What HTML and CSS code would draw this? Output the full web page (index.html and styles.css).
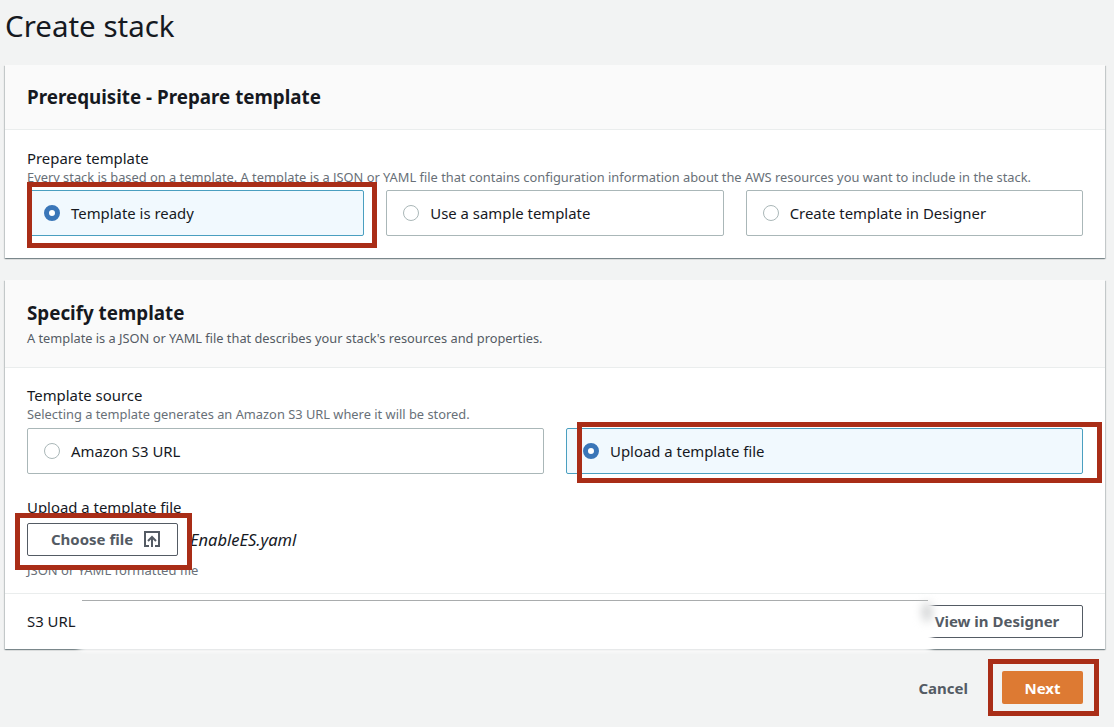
FILE: index.html
```html
<!DOCTYPE html>
<html lang="en">
<head>
<meta charset="utf-8">
<title>Create stack</title>
<link rel="stylesheet" href="styles.css">
</head>
<body>
<main class="page">
  <h1 class="title">Create stack</h1>

  <section class="card card-first">
    <header class="card-head head-short">
      <h2 class="card-title">Prerequisite - Prepare template</h2>
    </header>
    <div class="card-body body-first">
      <div class="label">Prepare template</div>
      <div class="hint">Every stack is based on a template. A template is a JSON or YAML file that contains configuration information about the AWS resources you want to include in the stack.</div>
      <div class="tiles tiles-3">
        <div class="tile selected"><span class="radio on"></span>Template is ready</div>
        <div class="tile"><span class="radio"></span>Use a sample template</div>
        <div class="tile"><span class="radio"></span>Create template in Designer</div>
      </div>
    </div>
  </section>

  <section class="card card-second">
    <header class="card-head head-tall">
      <h2 class="card-title">Specify template</h2>
      <p class="card-desc">A template is a JSON or YAML file that describes your stack's resources and properties.</p>
    </header>
    <div class="card-body body-second">
      <div class="label">Template source</div>
      <div class="hint">Selecting a template generates an Amazon S3 URL where it will be stored.</div>
      <div class="tiles tiles-2">
        <div class="tile"><span class="radio"></span>Amazon S3 URL</div>
        <div class="tile selected"><span class="radio on"></span>Upload a template file</div>
      </div>
      <div class="label upload-label">Upload a template file</div>
      <div class="upload-row">
        <button class="btn btn-choose">Choose file
          <svg class="upload-icon" viewBox="0 0 16 16" width="16" height="16" aria-hidden="true">
            <path d="M5 15H1V1h14v14h-4" fill="none" stroke="currentColor" stroke-width="2"/>
            <path d="M8 16V6M4 10l4-4 4 4" fill="none" stroke="currentColor" stroke-width="2"/>
          </svg>
        </button>
        <span class="file-name">EnableES.yaml</span>
      </div>
      <div class="hint hint-file">JSON or YAML formatted file</div>
    </div>
    <div class="s3-row">
      <span class="label">S3 URL</span>
      <button class="btn btn-designer">View in Designer</button>
    </div>
  </section>

  <footer class="actions">
    <button class="link-btn">Cancel</button>
    <button class="btn-primary">Next</button>
  </footer>
</main>

<div class="redact"></div>
<div class="mark mark-ready"></div>
<div class="mark mark-upload"></div>
<div class="mark mark-choose"></div>
<div class="mark mark-next"></div>
</body>
</html>
```

FILE: styles.css
```css
* { box-sizing: border-box; }
html, body { margin: 0; height: 727px; overflow: hidden; }
body {
  position: relative;
  background: #f2f3f3;
  color: #16191f;
  font-family: "Noto Sans", "Open Sans", sans-serif;
  font-size: 14.9px;
}
.page { padding: 0 9px 0 5px; }
.title {
  margin: 0;
  height: 65px;
  font-size: 29.5px;
  font-weight: 400;
  line-height: 52px;
}
.card {
  background: #fff;
  box-shadow: 0 1px 1px 0 rgba(0, 28, 36, .3), 1px 1px 1px 0 rgba(0, 28, 36, .15), -1px 1px 1px 0 rgba(0, 28, 36, .15);
}
.card-first { height: 193px; margin-bottom: 22px; }
.card-second { height: 369px; }
.card-head {
  background: #fafafa;
  border-bottom: 1px solid #eaeded;
  padding: 0 22px;
}
.head-short { height: 65px; padding-top: 19px; }
.head-tall { height: 88px; padding-top: 20px; }
.card-title { margin: 0; font-size: 18.8px; font-weight: 700; line-height: 26px; }
.card-desc { margin: 1px 0 0; font-size: 12.8px; line-height: 22px; color: #545b64; }
.card-body { padding: 0 22px; }
.body-first { padding-top: 19px; }
.body-second { padding-top: 18px; }
.label { font-size: 14.9px; line-height: 19px; }
.hint { margin-top: 2px; font-size: 12.85px; line-height: 15px; color: #687078; white-space: nowrap; }
.tiles { display: grid; gap: 22px; }
.tiles-3 { grid-template-columns: repeat(3, 1fr); margin-top: 5px; }
.tiles-2 { grid-template-columns: repeat(2, 1fr); margin-top: 6px; }
.tile {
  display: flex;
  align-items: center;
  height: 46px;
  padding-left: 16px;
  border: 1px solid #aab7b8;
  border-radius: 2px;
  background: #fff;
  font-size: 14.9px;
}
.tile.selected { border-color: #4a9fc0; background: #f1f9fe; }
.radio {
  flex: none;
  width: 16px;
  height: 16px;
  margin-right: 11px;
  border: 1px solid #aab7b8;
  border-radius: 50%;
  background: #fff;
}
.radio.on { border: 5px solid #3a76b8; }
.upload-label { margin-top: 24px; }
.upload-row { display: flex; align-items: center; gap: 12px; margin-top: 5px; height: 34px; }
.btn {
  display: inline-flex;
  align-items: center;
  justify-content: center;
  height: 33px;
  background: #fff;
  border: 1px solid #545b64;
  border-radius: 2px;
  color: #545b64;
  font: 700 15px "Noto Sans", "Open Sans", sans-serif;
}
.btn-choose { width: 151px; gap: 11px; padding: 0 0 0 6px; }
.upload-icon { flex: none; }
.file-name { font-size: 16.5px; font-style: italic; }
.hint-file { margin-top: 7px; font-size: 13px; }
.s3-row {
  display: flex;
  align-items: center;
  justify-content: space-between;
  margin-top: 15px;
  height: 55px;
  padding: 0 22px;
  border-top: 1px solid #eaeded;
}
.btn-designer { width: 172px; }
.actions {
  display: flex;
  align-items: center;
  justify-content: flex-end;
  gap: 34px;
  margin-top: 22px;
  padding-right: 22px;
}
.link-btn {
  padding: 0;
  border: 0;
  background: none;
  color: #545b64;
  font: 700 15px "Noto Sans", "Open Sans", sans-serif;
}
.btn-primary {
  width: 81px;
  height: 33px;
  border: 0;
  border-radius: 2px;
  background: #dd7a33;
  color: #fff;
  font: 700 15px "Noto Sans", "Open Sans", sans-serif;
}
/* Annotations laid over the screenshot */
.redact {
  position: absolute;
  left: 82px;
  top: 600px;
  width: 846px;
  height: 48px;
  background: #fff;
  border-top: 1px solid #a9acad;
  box-shadow: 2px 0 5px 2px #fff, -2px 0 5px 2px #fff;
}
.redact::after {
  content: "";
  position: absolute;
  right: -4px;
  top: 1px;
  width: 10px;
  height: 20px;
  background: #cfd1d2;
  border-radius: 50%;
  filter: blur(5px);
}
.mark { position: absolute; border: 5px solid #a92d17; }
.mark-ready { left: 27px; top: 182px; width: 350px; height: 66px; }
.mark-upload { left: 577px; top: 422px; width: 525px; height: 61px; }
.mark-choose { left: 15px; top: 513px; width: 177px; height: 57px; }
.mark-next { left: 988px; top: 659px; width: 111px; height: 57px; }
```
